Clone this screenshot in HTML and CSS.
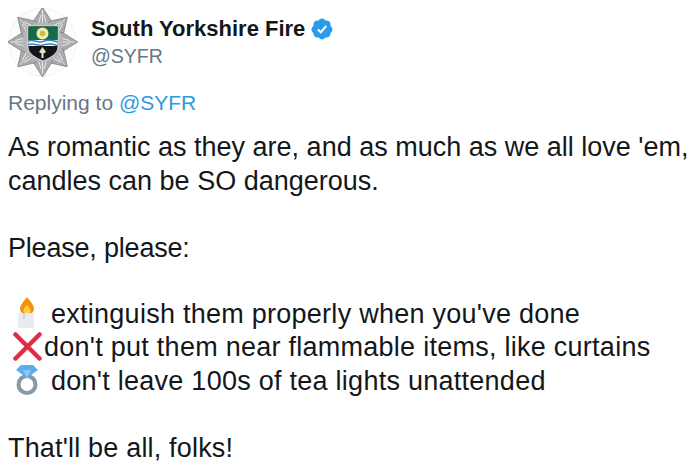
FILE: index.html
```html
<!DOCTYPE html>
<html lang="en">
<head>
    <meta charset="UTF-8">
    <title>South Yorkshire Fire</title>
    <link rel="stylesheet" href="styles.css">
</head>
<body>
    <div class="tweet">
        <div class="head">
            <svg class="avatar" width="72" height="72" viewBox="0 0 72 72">
                <circle cx="34.500" cy="34" r="34" fill="#fcfcfc" stroke="#f3f3f3"/>
                <defs>
                    <g id="blade">
                        <path d="M34.500 -1L44 14L44 22L25 22L25 14Z" fill="#a9abac" stroke="#77797a" stroke-width="0.700"/>
                        <path d="M34.500 2V22M33 7L29 21M36 7L40 21" stroke="#f0f1f1" stroke-width="0.900" fill="none"/>
                    </g>
                </defs>
                <use href="#blade" transform="rotate(0 34.500 34)"/>
                <use href="#blade" transform="rotate(45 34.500 34)"/>
                <use href="#blade" transform="rotate(90 34.500 34)"/>
                <use href="#blade" transform="rotate(135 34.500 34)"/>
                <use href="#blade" transform="rotate(180 34.500 34)"/>
                <use href="#blade" transform="rotate(225 34.500 34)"/>
                <use href="#blade" transform="rotate(270 34.500 34)"/>
                <use href="#blade" transform="rotate(315 34.500 34)"/>
                <circle cx="34.500" cy="34" r="20" fill="#b5b7b8"/>
                <path d="M20 18H50V39C50 46 42 50 35 53C28 50 20 46 20 39Z" fill="#15151a" stroke="#dcdcdc" stroke-width="1"/>
                <path d="M20.500 18.500H49.500V33H20.500Z" fill="#146b44"/>
                <circle cx="34.500" cy="25.500" r="6" fill="#f1ecb5"/>
                <circle cx="34.500" cy="25.500" r="2.800" fill="#cdbd45"/>
                <path d="M20.500 32H49.500V38H20.500Z" fill="#fff"/>
                <path d="M20.500 33C26 31 30 35.500 35 33.500S44 31.500 49.500 34M20.500 36.500C26 34.500 30 38.500 35 37S44 35 49.500 37.500" fill="none" stroke="#3d86b8" stroke-width="1.500"/>
                <path d="M34.500 39L38 44L35.500 45.500V50H33.500V45.500L31 44Z" fill="#e7e0bf"/>
            </svg>
            <div class="names">
                <div class="name-row">
                    <span class="name">South Yorkshire Fire</span>
                    <svg class="badge" width="24" height="24" viewBox="0 0 24 24">
                        <path d="M22.500 12.500c0-1.580-.875-2.950-2.148-3.600.154-.435.238-.905.238-1.400 0-2.210-1.710-3.998-3.818-3.998-.47 0-.92.084-1.336.25C14.818 2.415 13.510 1.500 12 1.500s-2.816.917-3.437 2.250c-.415-.165-.866-.25-1.336-.25-2.110 0-3.818 1.790-3.818 4 0 .494.083.964.237 1.400-1.272.65-2.147 2.018-2.147 3.600 0 1.495.782 2.798 1.942 3.486-.02.17-.032.34-.032.514 0 2.210 1.708 4 3.818 4 .47 0 .92-.086 1.335-.25.620 1.334 1.926 2.250 3.437 2.250 1.512 0 2.818-.916 3.437-2.250.415.163.865.248 1.336.248 2.110 0 3.818-1.790 3.818-4 0-.174-.012-.344-.033-.513 1.158-.687 1.943-1.990 1.943-3.484z" fill="#2b9be8"/>
                        <path d="M8 12.500l2.800 2.800L16.200 9" fill="none" stroke="#fff" stroke-width="2"/>
                    </svg>
                </div>
                <div class="handle">@SYFR</div>
            </div>
        </div>
        <div class="reply">Replying to <span class="link">@SYFR</span></div>
        <div class="text">
            <p>As romantic as they are, and as much as we all love 'em,<br>candles can be SO dangerous.</p>
            <p class="please">Please, please:</p>
            <div class="emoji-lines">
                <div class="line">
                    <svg class="emoji candle" width="17" height="31" viewBox="0 0 17 31">
                        <path d="M9 0C12 4 16 8 16 12C16 15 13 17 9 17C5 17 2 15 2 12C2 8 6 4 9 0Z" fill="#f4900c"/>
                        <path d="M9 8C11 10 12.500 11.500 12.500 13.500C12.500 15.500 11 17 9 17C7 17 5.500 15.500 5.500 13.500C5.500 11.500 7 10 9 8Z" fill="#ffcc4d"/>
                        <path d="M0 16H16V31H0Z" fill="#e6ecf0"/>
                        <path d="M5 16H7V22H5Z" fill="#ccd6dd"/>
                    </svg>
                    <span>extinguish them properly when you've done</span>
                </div>
                <div class="line">
                    <svg class="emoji cross" width="29" height="29" viewBox="0 0 29 29">
                        <path d="M2.500 2.500L26.500 26.500M26.500 2.500L2.500 26.500" stroke="#dd2e44" stroke-width="4.500" stroke-linecap="round"/>
                    </svg>
                    <span>don't put them near flammable items, like curtains</span>
                </div>
                <div class="line">
                    <svg class="emoji ring" width="22" height="30" viewBox="0 0 22 30">
                        <circle cx="11" cy="19.500" r="8.500" fill="none" stroke="#8899a6" stroke-width="4"/>
                        <path d="M5 0H17L22 5L11 13L0 5Z" fill="#5dadec"/>
                        <path d="M7 5H15L11 13Z" fill="#88c9f9"/>
                    </svg>
                    <span>don't leave 100s of tea lights unattended</span>
                </div>
            </div>
            <p class="last">That'll be all, folks!</p>
        </div>
    </div>
</body>
</html>
```

FILE: styles.css
```css
body {
    margin: 0;
    background-color: #fff;
    color: #14171a;
    font-family: "Liberation Sans", Arial, sans-serif;
    overflow: hidden;
}
.tweet {
    padding: 8px 0 0 8px;
}
.head {
    display: flex;
    align-items: center;
    gap: 11px;
}
.avatar {
    display: block;
}
.names {
    padding-bottom: 3px;
}
.name-row {
    display: flex;
    align-items: center;
    gap: 5px;
    height: 26px;
}
.name {
    font-size: 22px;
    font-weight: bold;
}
.badge {
    display: block;
}
.handle {
    color: #657786;
    font-size: 19.500px;
    line-height: 28px;
}
.reply {
    color: #657786;
    font-size: 21px;
    line-height: 26px;
    margin-top: 10px;
}
.link {
    color: #2b9ae0;
}
.text {
    font-size: 27px;
    line-height: 33.500px;
    margin-top: 15px;
}
.text p {
    margin: 0 0 33.500px;
}
.text .please {
    letter-spacing: -0.200px;
    margin-bottom: 32.500px;
}
.emoji-lines {
    margin-bottom: 33.500px;
    letter-spacing: 0.260px;
}
.text .last {
    letter-spacing: 0.180px;
    margin-bottom: 0;
}
.line {
    display: flex;
    align-items: center;
    height: 33.500px;
    white-space: nowrap;
}
.emoji {
    flex: none;
    margin-bottom: 3px;
}
.candle {
    margin-left: 10px;
    margin-right: 16px;
}
.cross {
    margin-left: 5px;
    margin-right: 2px;
}
.ring {
    margin-left: 8px;
    margin-right: 13px;
}
```
